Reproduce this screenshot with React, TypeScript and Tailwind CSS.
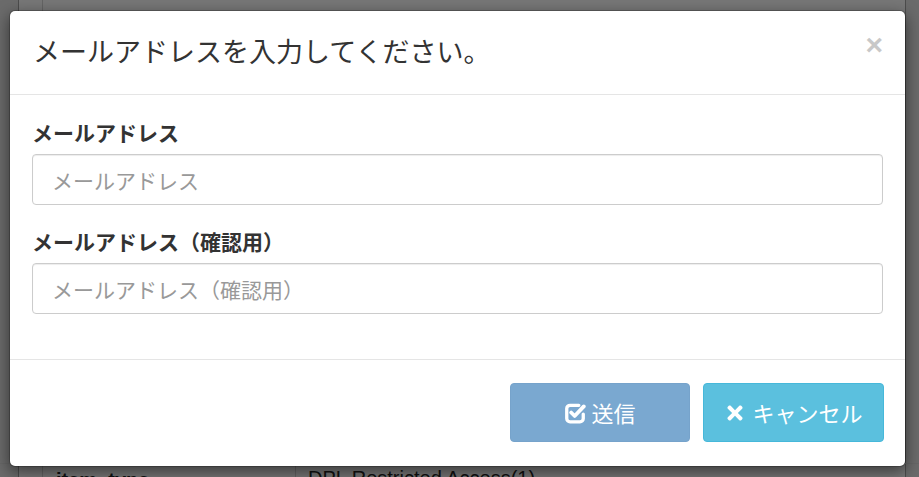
import { FaTimes } from 'react-icons/fa'

const jp = { fontFamily: '"Noto Sans CJK JP", "Noto Sans", sans-serif' }

function CheckSquareIcon() {
  return (
    <svg width="22" height="22" viewBox="0 0 20 20" fill="none" className="shrink-0">
      <path
        d="M13.5 3H5.5a3 3 0 0 0-3 3v9a3 3 0 0 0 3 3h9a3 3 0 0 0 3-3v-4"
        stroke="white"
        strokeWidth="3"
        strokeLinecap="round"
      />
      <path d="M6.5 9.5l3.2 3.2 8.3-8.7" stroke="white" strokeWidth="3.4" strokeLinecap="round" strokeLinejoin="round" />
    </svg>
  )
}

export default function App() {
  return (
    <div className="relative w-[919px] h-[477px] overflow-hidden bg-[#eeeeee]" style={jp}>
      {/* page behind the dialog */}
      <div className="flex flex-col h-full">
        <div className="flex-1 flex">
          <div className="w-[19px] bg-[#d6d6d6] border-r border-[#999]" />
          <div className="w-[24px] border-r border-[#c8c8c8]" />
          <div className="flex-1" />
          <div className="w-[14px] bg-[#d6d6d6] border-l border-[#999]" />
        </div>
        <div className="h-[14px] flex shrink-0 border-t border-[#cfcfcf]">
          <div className="w-[19px] bg-[#d6d6d6] border-r border-[#999]" />
          <div className="w-[24px] border-r border-[#c8c8c8]" />
          <div
            className="w-[253px] border-r border-[#c8c8c8] pl-[13px] pt-[4px] text-[20px] leading-[24px] font-bold text-[#222]"
            style={{ fontFamily: '"Liberation Sans", Arial, sans-serif' }}
          >
            item_type
          </div>
          <div
            className="w-[609px] pl-[12px] pt-[2px] text-[20px] leading-[24px] text-[#222]"
            style={{ fontFamily: '"Liberation Sans", Arial, sans-serif' }}
          >
            DPL Restricted Access(1)
          </div>
          <div className="flex-1 bg-[#d6d6d6] border-l border-[#999]" />
        </div>
      </div>

      {/* backdrop */}
      <div className="absolute inset-0 bg-black/50" />

      {/* dialog */}
      <div className="absolute left-[9px] top-[10px] w-[897px] h-[457px] flex flex-col rounded-[6px] bg-white border border-black/20 shadow-[0_5px_15px_rgba(0,0,0,0.5)] bg-clip-padding">
        {/* header */}
        <div className="h-[84px] shrink-0 flex items-center justify-between pl-[23px] pr-[22px] border-b border-[#e5e5e5]">
          <h4 className="text-[27px] leading-[36px] font-normal text-[#333] -mt-[4px]">メールアドレスを入力してください。</h4>
          <span className="text-[30px] leading-none font-bold text-[#c8c8c8] -mt-[16px]" style={{ fontFamily: '"Liberation Sans", Arial, sans-serif' }}>
            ×
          </span>
        </div>

        {/* body */}
        <div className="flex-1 flex flex-col px-[22px] pt-[23px]">
          <label className="h-[28px] text-[21px] leading-[28px] font-bold text-[#333] mb-[8px]">メールアドレス</label>
          <input
            className="h-[51px] w-full rounded-[4px] border border-[#cccccc] px-[19px] text-[21px] text-[#555] placeholder:text-[#999] shadow-[inset_0_1px_1px_rgba(0,0,0,0.075)] outline-none"
            placeholder="メールアドレス"
            style={jp}
          />
          <label className="h-[28px] mt-[22px] text-[21px] leading-[28px] font-bold text-[#333] mb-[8px]">
            メールアドレス（確認用）
          </label>
          <input
            className="h-[51px] w-full rounded-[4px] border border-[#cccccc] px-[19px] text-[21px] text-[#555] placeholder:text-[#999] shadow-[inset_0_1px_1px_rgba(0,0,0,0.075)] outline-none"
            placeholder="メールアドレス（確認用）"
            style={jp}
          />
        </div>

        {/* footer */}
        <div className="h-[107px] shrink-0 border-t border-[#e5e5e5] flex items-start justify-end gap-[13px] pt-[23px] pr-[21px]">
          <button
            className="w-[180px] h-[59px] rounded-[4px] bg-[#7aa8d0] border border-[#76a3cb] flex items-center justify-center gap-[5px] text-[22px] text-white"
            style={jp}
          >
            <CheckSquareIcon />
            <span>送信</span>
          </button>
          <button
            className="w-[181px] h-[59px] rounded-[4px] bg-[#5bc0de] border border-[#46b8da] flex items-center justify-center gap-[6px] text-[22px] text-white"
            style={jp}
          >
            <FaTimes className="w-[22px] h-[22px]" />
            <span>キャンセル</span>
          </button>
        </div>
      </div>
    </div>
  )
}
